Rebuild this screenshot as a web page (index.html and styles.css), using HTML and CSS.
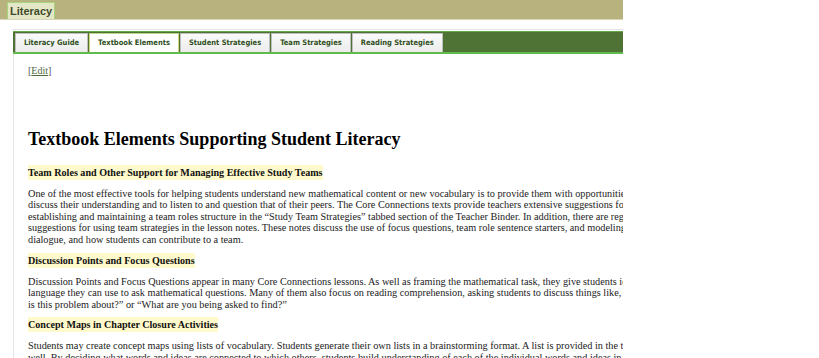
FILE: index.html
```html
<!DOCTYPE html>
<html lang="en">
<head>
    <meta charset="UTF-8">
    <meta name="viewport" content="width=device-width, initial-scale=1.0">
    <title>Literacy</title>
    <link rel="stylesheet" href="styles.css">
</head>
<body>
    <div class="page">
        <div class="topbar">
            <span class="section-tab">Literacy</span>
        </div>

        <div class="main">
            <ul class="tabs">
                <li><a href="#">Literacy Guide</a></li>
                <li class="active"><a href="#">Textbook Elements</a></li>
                <li><a href="#">Student Strategies</a></li>
                <li><a href="#">Team Strategies</a></li>
                <li><a href="#">Reading Strategies</a></li>
            </ul>

            <div class="panel">
                <p class="edit">[<a href="#">Edit</a>]</p>

                <h1>Textbook Elements Supporting Student Literacy</h1>

                <h4><span>Team Roles and Other Support for Managing Effective Study Teams</span></h4>
                <p>One of the most effective tools for helping students understand new mathematical content or new vocabulary is to provide them with opportunities to<br>
                discuss their understanding and to listen to and question that of their peers. The Core Connections texts provide teachers extensive suggestions for<br>
                establishing and maintaining a team roles structure in the &ldquo;Study Team Strategies&rdquo; tabbed section of the Teacher Binder. In addition, there are regular<br>
                suggestions for using team strategies in the lesson notes. These notes discuss the use of focus questions, team role sentence starters, and modeling of<br>
                dialogue, and how students can contribute to a team.</p>

                <h4><span>Discussion Points and Focus Questions</span></h4>
                <p>Discussion Points and Focus Questions appear in many Core Connections lessons. As well as framing the mathematical task, they give students ideas about<br>
                language they can use to ask mathematical questions. Many of them also focus on reading comprehension, asking students to discuss things like, &ldquo;What<br>
                is this problem about?&rdquo; or &ldquo;What are you being asked to find?&rdquo;</p>

                <h4><span>Concept Maps in Chapter Closure Activities</span></h4>
                <p>Students may create concept maps using lists of vocabulary. Students generate their own lists in a brainstorming format. A list is provided in the text as<br>
                well. By deciding what words and ideas are connected to which others, students build understanding of each of the individual words and ideas in the map.</p>
            </div>
        </div>
    </div>
</body>
</html>
```

FILE: styles.css
```css
body {
    margin: 0;
    padding: 0;
    background-color: #fff;
    font-family: 'Liberation Serif', 'Times New Roman', serif;
}
.page {
    width: 623px;
    height: 358px;
    overflow: hidden;
}
.topbar {
    height: 19px;
    background-color: #b8b37e;
    border-bottom: 1px solid #d8d5b8;
    padding-left: 7px;
    display: flex;
    align-items: flex-end;
}
.section-tab {
    display: block;
    height: 16px;
    line-height: 16px;
    padding: 0 2px;
    background-color: #e4e7c6;
    border: 1px solid #a6d47c;
    border-bottom: none;
    font-family: 'Liberation Sans', Arial, sans-serif;
    font-size: 11px;
    font-weight: bold;
    color: #3f4a2c;
}
.main {
    margin-left: 13px;
    margin-top: 9px;
    border-top: 1px solid #e6e6e6;
    padding-top: 1px;
}
.tabs {
    list-style: none;
    margin: 0;
    padding: 1px 0 0 2px;
    height: 19px;
    display: flex;
    background-color: #4f7335;
    border-top: 1px solid #64a84a;
    border-bottom: 2px solid #5fbb4e;
    width: 608px;
    overflow: hidden;
}
.tabs li {
    margin-right: 1px;
}
.tabs a {
    display: block;
    height: 18px;
    line-height: 18px;
    padding: 0 8px;
    background: linear-gradient(#fafafa, #ececec);
    border: 1px solid #bfbfbf;
    border-bottom: none;
    font-family: 'DejaVu Sans Condensed', 'DejaVu Sans', sans-serif;
    font-stretch: condensed;
    font-size: 7.5px;
    font-weight: bold;
    color: #2f4f22;
    text-decoration: none;
    white-space: nowrap;
}
.tabs li.active a {
    background: #fff;
    border-color: #d6d27a;
    border-top-color: #b8d88a;
    height: 19px;
}
.panel {
    border-left: 1px solid #e4e4e4;
    padding: 11px 0 0 14px;
    width: 760px;
}
.edit {
    margin: 0;
    font-size: 10px;
    color: #555;
}
.edit a {
    color: #4d6a40;
}
h1 {
    margin: 52px 0 0 0;
    font-size: 18px;
    color: #000;
}
h4 {
    margin: 9px 0 0 0;
    font-size: 10.1px;
    line-height: 12px;
    color: #111;
}
h1 + h4 {
    margin-top: 17px;
}
h4 span {
    background-color: #fffacc;
    padding: 2px 0;
}
p {
    margin: 9px 0 0 0;
    font-size: 10.25px;
    line-height: 11.6px;
    color: #222;
    white-space: nowrap;
}
```
